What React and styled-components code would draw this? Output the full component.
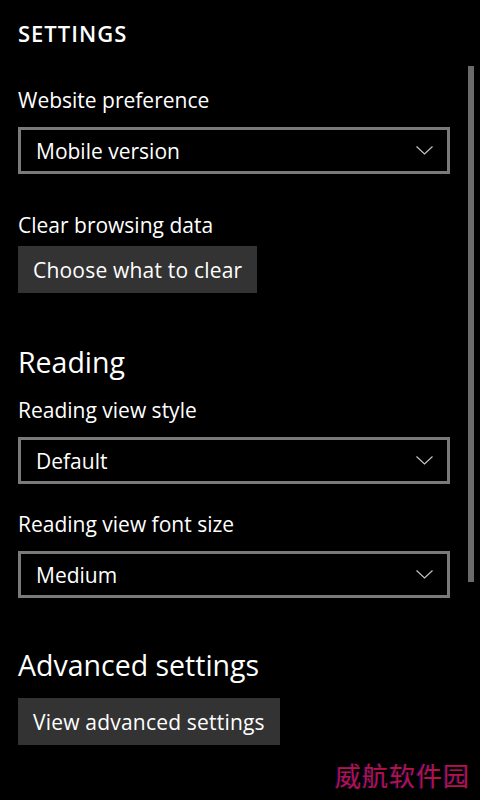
import React from "react";
import styled, { createGlobalStyle } from "styled-components";

const GlobalStyle = createGlobalStyle`
  html, body {
    margin: 0;
    padding: 0;
    background: #000;
  }
  body {
    font-family: "Open Sans", "Noto Sans", sans-serif;
    color: #fff;
  }
`;

const Page = styled.div`
  position: relative;
  width: 480px;
  height: 800px;
  overflow: hidden;
  background: #000;
  box-sizing: border-box;
  padding: 19px 30px 0 18px;
  display: flex;
  flex-direction: column;
`;

const Title = styled.h1`
  margin: 0;
  font-size: 22px;
  line-height: 28px;
  font-weight: 600;
  letter-spacing: 1px;
`;

const Heading = styled.h2`
  margin: ${(p) => p.$top}px 0 0;
  font-size: 28.5px;
  line-height: 38px;
  font-weight: 400;
`;

const Label = styled.div`
  margin-top: ${(p) => p.$top}px;
  font-size: 21px;
  line-height: 28px;
`;

const Select = styled.div`
  margin-top: ${(p) => p.$top || 13}px;
  height: 47px;
  width: 432px;
  box-sizing: border-box;
  border: 3px solid #7a7a7a;
  display: flex;
  align-items: center;
  justify-content: space-between;
  padding: 0 14px 0 15px;
  font-size: 21px;
`;

const Button = styled.div`
  margin-top: ${(p) => p.$top}px;
  align-self: flex-start;
  height: 47px;
  box-sizing: border-box;
  background: #333333;
  padding: 0 15px;
  display: flex;
  align-items: center;
  font-size: 21px;
  letter-spacing: 0.2px;
`;

const Scrollbar = styled.div`
  position: absolute;
  left: 468px;
  top: 66px;
  width: 6px;
  height: 516px;
  background: #6b6b6b;
`;

const Watermark = styled.div`
  position: absolute;
  right: 10px;
  bottom: 9px;
  font-family: "Noto Sans CJK SC", sans-serif;
  font-size: 26px;
  line-height: 32px;
  letter-spacing: 1px;
  color: #b3124a;
  text-shadow: -1px 0 0 rgba(40, 20, 160, 0.6);
`;

const Chevron = () => (
  <svg width="17" height="9" viewBox="0 0 17 9">
    <path d="M0.5 0.5 L8.5 8 L16.5 0.5" fill="none" stroke="#c8c8c8" strokeWidth="1.1" />
  </svg>
);

const Dropdown = ({ value, top }) => (
  <Select $top={top}>
    <span>{value}</span>
    <Chevron />
  </Select>
);

export default function App() {
  return (
    <>
      <GlobalStyle />
      <Page>
        <Title>SETTINGS</Title>
        <Label $top={39}>Website preference</Label>
        <Dropdown value="Mobile version" />
        <Label $top={37}>Clear browsing data</Label>
        <Button $top={7}>Choose what to clear</Button>

        <Heading $top={50}>Reading</Heading>
        <Label $top={15}>Reading view style</Label>
        <Dropdown value="Default" />
        <Label $top={26}>Reading view font size</Label>
        <Dropdown value="Medium" />

        <Heading $top={48}>Advanced settings</Heading>
        <Button $top={14}>View advanced settings</Button>

        <Scrollbar />
        <Watermark>威航软件园</Watermark>
      </Page>
    </>
  );
}
